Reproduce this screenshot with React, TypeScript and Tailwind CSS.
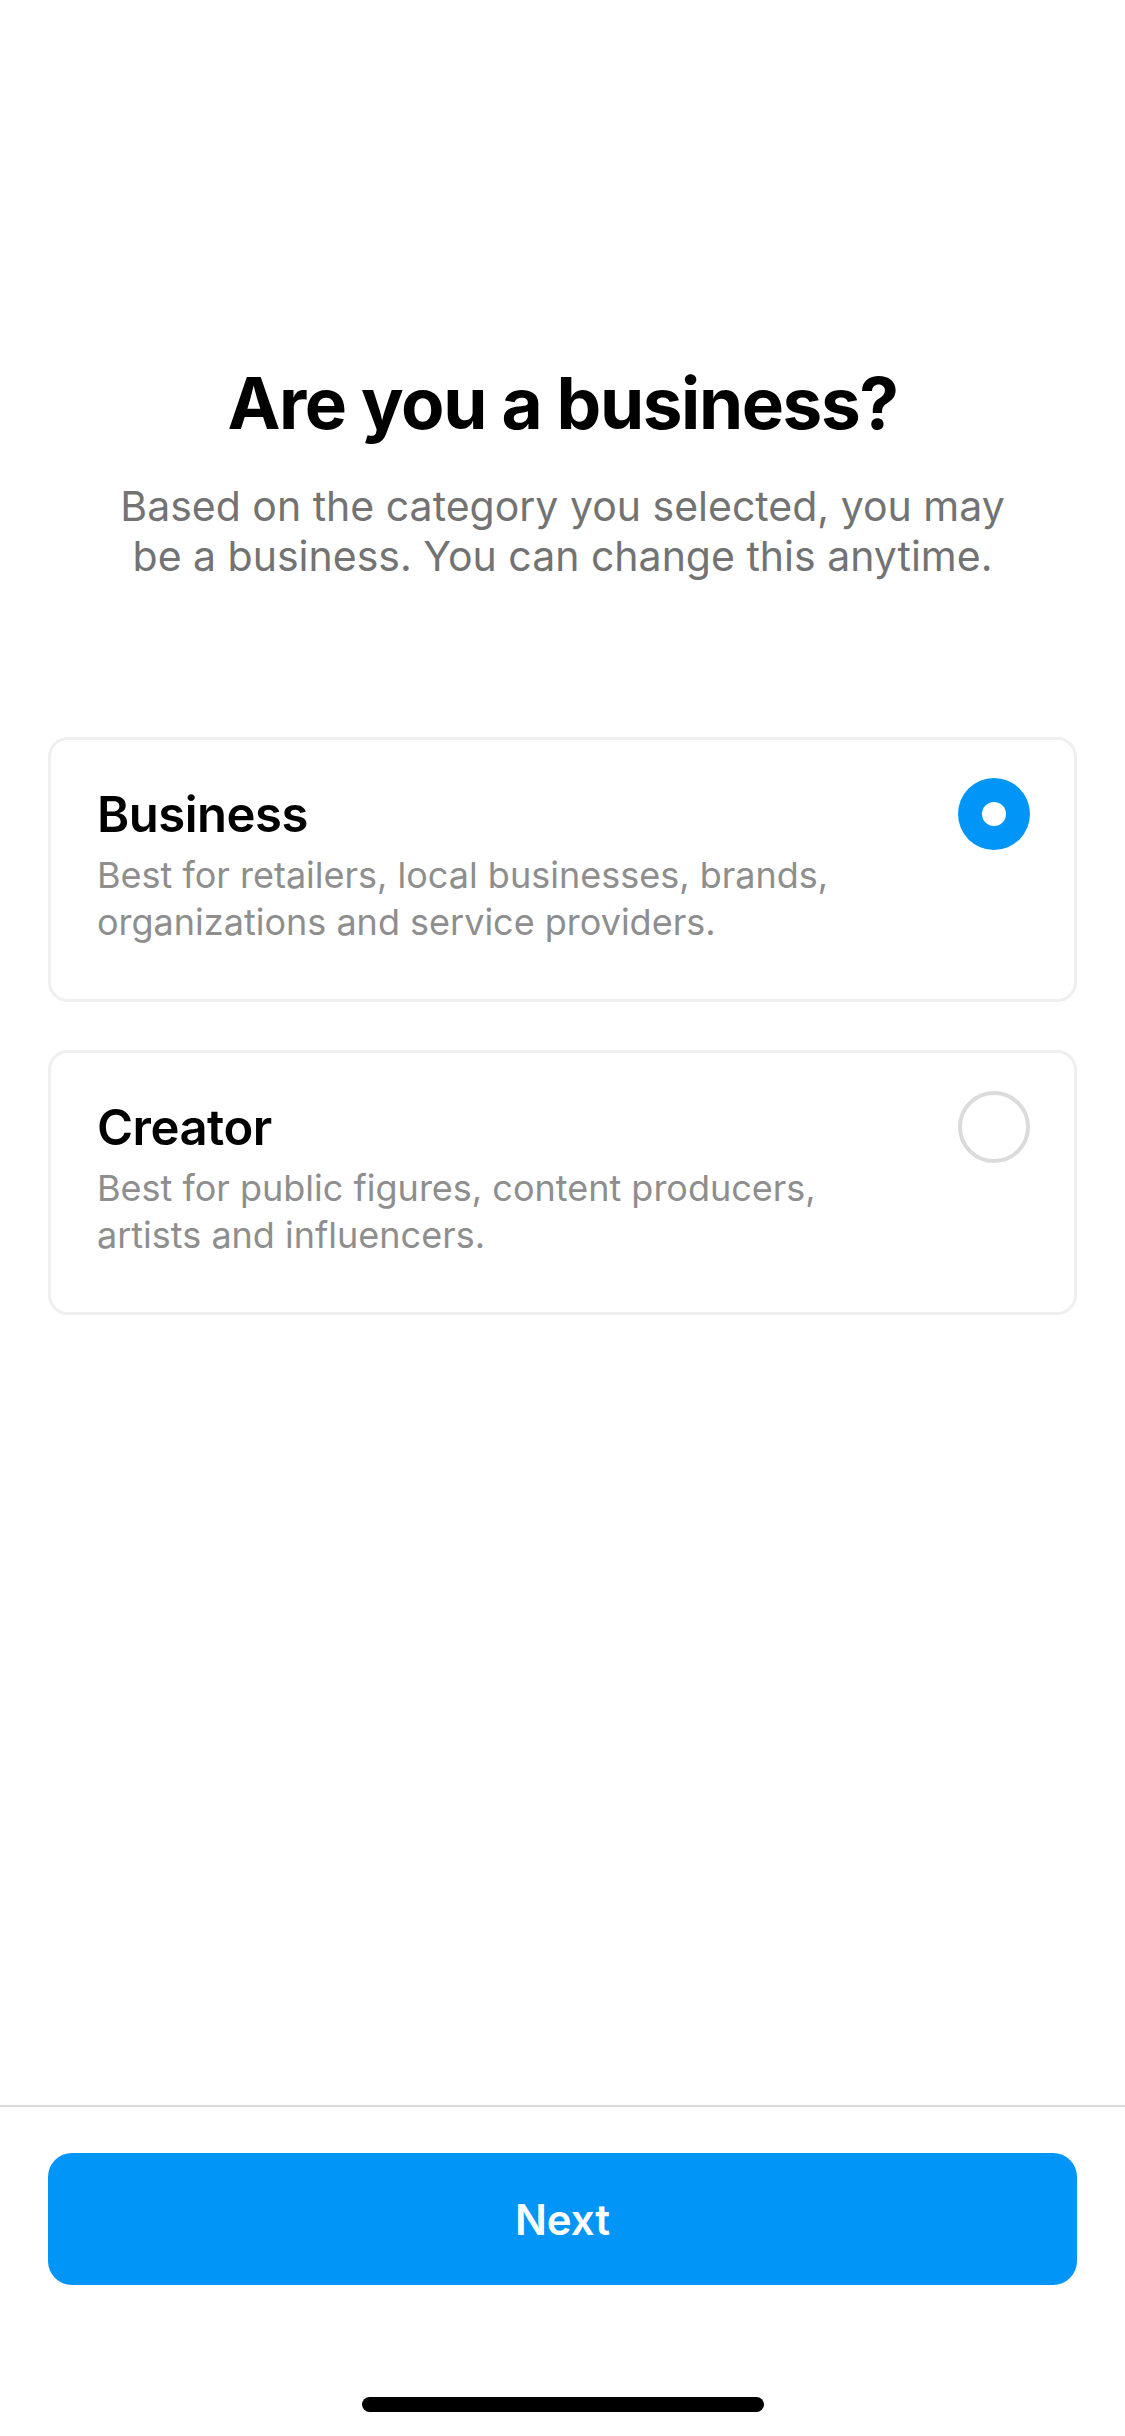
import React, { useState } from 'react';

const options = [
  {
    id: 'business',
    title: 'Business',
    lines: ['Best for retailers, local businesses, brands,', 'organizations and service providers.'],
  },
  {
    id: 'creator',
    title: 'Creator',
    lines: ['Best for public figures, content producers,', 'artists and influencers.'],
  },
];

function Radio({ checked }: { checked: boolean }) {
  if (checked) {
    return (
      <div className="mt-[3px] w-[72px] h-[72px] rounded-full bg-[#0095f6] flex items-center justify-center shrink-0">
        <div className="w-[24px] h-[24px] rounded-full bg-white" />
      </div>
    );
  }
  return <div className="mt-[3px] w-[72px] h-[72px] rounded-full border-[4px] border-[#dbdbdb] shrink-0" />;
}

export default function App() {
  const [selected, setSelected] = useState('business');

  return (
    <div
      className="w-[1125px] h-[2436px] bg-white flex flex-col text-black"
      style={{ fontFamily: 'Inter, "Noto Sans", sans-serif' }}
    >
      {/* Header */}
      <div className="pt-[360px] flex flex-col items-center text-center">
        <h1 className="text-[71px] leading-[86px] font-bold tracking-[-0.02em]">Are you a business?</h1>
        <p className="mt-[35px] text-[41px] leading-[50px] text-[#737373]">
          Based on the category you selected, you may
          <br />
          be a business. You can change this anytime.
        </p>
      </div>

      {/* Options */}
      <div className="mt-[156px] px-[48px] flex flex-col gap-[48px]">
        {options.map((opt) => (
          <button
            key={opt.id}
            onClick={() => setSelected(opt.id)}
            className="w-full h-[265px] rounded-[20px] border-[3px] border-[#efefef] pl-[46px] pr-[44px] pt-[35px] flex items-start justify-between text-left"
          >
            <div className="flex flex-col pt-[11px]">
              <span className="text-[49px] leading-[58px] font-semibold tracking-[-0.01em]">{opt.title}</span>
              <span className="mt-[8px] text-[36px] leading-[47px] text-[#8e8e8e]">
                {opt.lines[0]}
                <br />
                {opt.lines[1]}
              </span>
            </div>
            <Radio checked={selected === opt.id} />
          </button>
        ))}
      </div>

      <div className="flex-1" />

      {/* Footer */}
      <div className="border-t-[2px] border-[#dbdbdb] pt-[46px] px-[48px] flex flex-col items-center">
        <button className="w-full h-[132px] rounded-[24px] bg-[#0095f6] text-white text-[42px] font-semibold">
          Next
        </button>
        <div className="mt-[112px] mb-[24px] w-[402px] h-[15px] rounded-full bg-black" />
      </div>
    </div>
  );
}
